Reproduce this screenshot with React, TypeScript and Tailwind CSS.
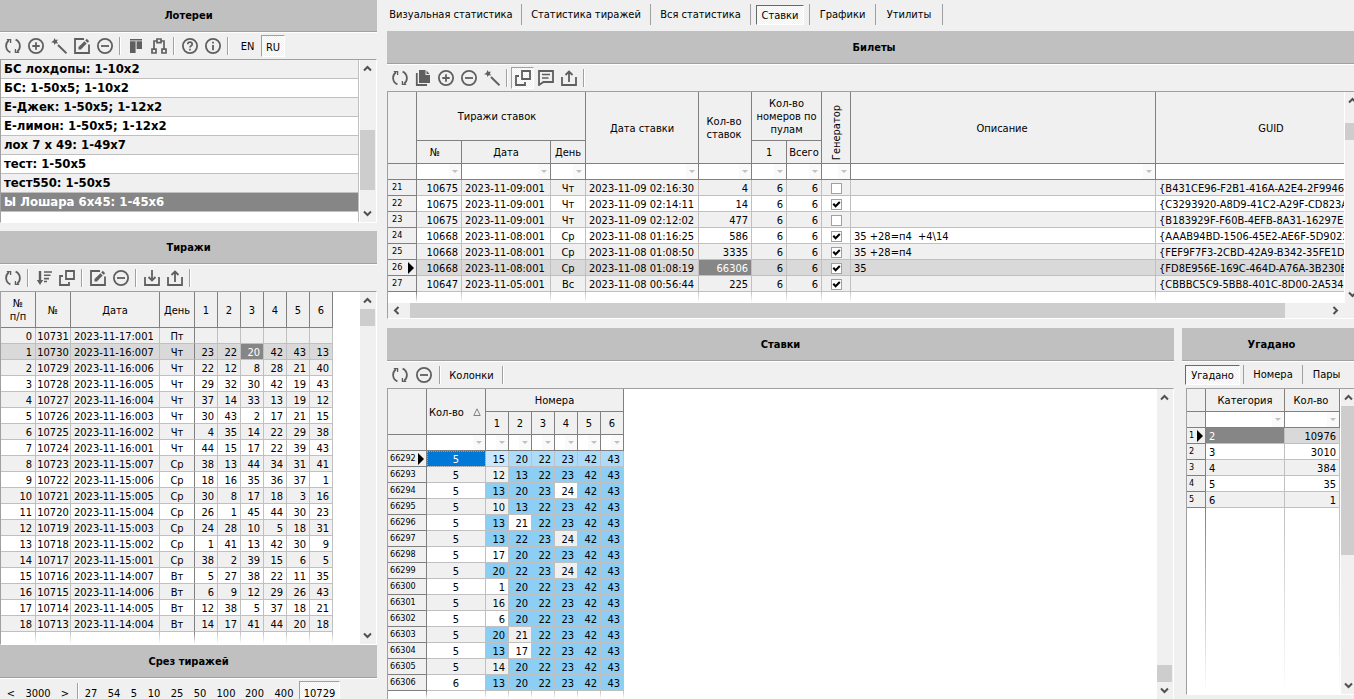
import type { ReactNode } from "react";

type IconName =
  | "refresh" | "plus" | "wand" | "edit" | "minus" | "align" | "tree" | "help"
  | "info" | "sort" | "windows" | "import" | "export" | "copy" | "comment";

const shapes: Record<IconName, ReactNode> = {
  refresh: (
    <>
      <path d="M5.4 14.4A7 7 0 0 1 4 2.3M10.6 1.6A7 7 0 0 1 12 13.7" />
      <path d="M1.8 1.6H5.6V5M14.2 14.4H10.4V11" strokeWidth="1.3" />
    </>
  ),
  plus: (
    <>
      <circle cx="8" cy="8" r="7.1" />
      <path d="M8 4.3V11.7M4.3 8H11.7" />
    </>
  ),
  minus: (
    <>
      <circle cx="8" cy="8" r="7.1" />
      <path d="M4 8H12" />
    </>
  ),
  wand: (
    <>
      <path d="M7 7L15.5 15.3" strokeWidth="2" />
      <path d="M3.6 0L4.6 2L7 1.4L5.8 3.6L7.2 5.6L4.7 5.2L3.4 7L2.8 4.8L0 4.2L2.4 2.8Z" fill="currentColor" stroke="none" />
    </>
  ),
  edit: (
    <>
      <path d="M10 1H1V15H15V6.5" />
      <path d="M4.5 11.4V9L10.4 3.2L12.7 5.5L6.9 11.4ZM11.2 2.4L12.8 .8L15.2 3.2L13.6 4.8Z" fill="currentColor" stroke="none" />
    </>
  ),
  align: <path d="M2 1H14V2.4H2ZM2 3.2H7.6V15H2ZM8.6 3.2H14V11H8.6Z" fill="currentColor" stroke="none" />,
  tree: (
    <>
      <path d="M6 1H10V4.6H6ZM1 11.2H5V15H1ZM11 11.2H15V15H11Z" strokeWidth="1.7" />
      <path d="M6 3H3V11M10 3H13V11" strokeWidth="1.7" />
    </>
  ),
  help: (
    <>
      <circle cx="8" cy="8" r="7.1" />
      <path d="M5.8 6.3C5.8 3.4 10.2 3.5 10.2 6.2C10.2 7.8 8 7.7 8 9.6M8 10.8V12.4" strokeWidth="1.7" />
    </>
  ),
  info: (
    <>
      <circle cx="8" cy="8" r="7.1" />
      <path d="M8 3.8V5.4M8 7V12.3" />
    </>
  ),
  sort: (
    <>
      <path d="M4 1V12" strokeWidth="2.4" />
      <path d="M.8 10H7.2L4 15Z" fill="currentColor" stroke="none" />
      <path d="M8 2H16M8 5.3H14.5M8 8.6H13M8 11.5H11" strokeWidth="1.6" />
    </>
  ),
  windows: (
    <>
      <path d="M7 1H15V9H7Z" />
      <path d="M4 6H1V15H10V12" />
    </>
  ),
  import: <path d="M1 7V15H15V7M8 0V10M4.5 7L8 10.5L11.5 7" />,
  export: <path d="M1 7V15H15V7M8 12V2M4.5 5L8 1.5L11.5 5" />,
  copy: (
    <>
      <path d="M4 0H10.5V5H15V13H4Z M11.5 0.4L14.6 4H11.5Z" fill="currentColor" stroke="none" />
      <path d="M1.8 3V15H12" />
    </>
  ),
  comment: (
    <>
      <path d="M1 1H15V12H5.5L1 15Z" />
      <path d="M4 4.5H12M4 8H10.5" strokeWidth="1.6" />
    </>
  ),
};

function Icon({ name }: { name: IconName }) {
  return (
    <svg viewBox="0 0 16 16" className="size-4" fill="none" stroke="currentColor" strokeWidth="1.8" aria-hidden="true">
      {shapes[name]}
    </svg>
  );
}

const checker = "bg-[repeating-conic-gradient(#fff_0_25%,#f0f0f0_0_50%)] bg-[length:2px_2px]";

function Tool({ name, label, pressed, wide }: { name: IconName; label: string; pressed?: boolean; wide?: boolean }) {
  const look = pressed ? `border-l border-t border-r border-b border-l-[#a0a0a0] border-t-[#a0a0a0] border-r-white border-b-white ${checker}` : "";
  return (
    <button
      type="button"
      aria-label={label}
      aria-pressed={pressed}
      className={`flex h-[22px] ${wide ? "w-6" : "w-[23px]"} shrink-0 items-center justify-center text-[#5f5f5f] ${look}`}
    >
      <Icon name={name} />
    </button>
  );
}

function Sep() {
  return <span className="mr-[2px] ml-[3px] h-[18px] w-[2px] shrink-0 border-r border-l border-r-white border-l-[#a0a0a0]" />;
}

function Toolbar({ label, children }: { label: string; children: ReactNode }) {
  return (
    <div role="toolbar" aria-label={label} className="flex h-[26px] shrink-0 items-center gap-x-0 pl-px">
      {children}
    </div>
  );
}

/* The right-hand titles are centred a little past the window's edge, as their panels run under it. */
function Title({ children, first, inset }: { children: string; first?: boolean; inset?: boolean }) {
  return (
    <div className={`${first ? "h-[33px]" : "h-[34px]"} shrink-0 border-b border-white`}>
      <h2 className={`flex h-full items-center justify-center border-b border-[#a0a0a0] bg-[#c0c0c0] text-[11px] font-bold ${inset ? "pl-[7px]" : ""}`}>
        {children}
      </h2>
    </div>
  );
}

const turns = { up: "", down: "rotate-180", left: "-rotate-90", right: "rotate-90" };

function Arrow({ dir }: { dir: keyof typeof turns }) {
  return (
    <button type="button" aria-label={`scroll ${dir}`} className="flex h-[17px] w-[15px] shrink-0 items-center justify-center text-[#505050]">
      <svg viewBox="0 0 9 7" className={`h-[7px] w-[9px] shrink-0 ${turns[dir]}`} fill="none" stroke="currentColor" strokeWidth="2">
        <path d="M1 5.5L4.5 2L8 5.5" />
      </svg>
    </button>
  );
}

/* parts: relative sizes of the track before the thumb, the thumb, and the track after it */
function Scroll({ parts, across }: { parts: [number, number, number]; across?: boolean }) {
  return (
    <div className={`flex shrink-0 bg-[#f0f0f0] ${across ? "h-[15px] items-center px-px" : "w-[17px] flex-col items-start border-l border-white"}`}>
      <Arrow dir={across ? "left" : "up"} />
      {parts.map((p, i) => (
        <div
          key={i}
          className={`basis-0 ${across ? "h-full" : "w-[15px]"} ${i === 1 ? "bg-[#cdcdcd]" : ""}`}
          style={{ flexGrow: p }}
        />
      ))}
      <Arrow dir={across ? "right" : "down"} />
    </div>
  );
}

function Filter({ name }: { name: string }) {
  return (
    <td className="h-4 border-r border-b border-[#808080] bg-white p-0">
      <div className="flex h-[15px]">
        <input aria-label={`Фильтр: ${name}`} className="h-full w-0 min-w-0 flex-1 outline-none" />
        <button type="button" aria-label={`Список: ${name}`} className="flex w-3 shrink-0 items-center justify-center bg-[#fafafa]">
          <svg viewBox="0 0 6 3" className="h-[3px] w-[6px]" fill="#c0c0c0"><path d="M0 0H6L3 3Z" /></svg>
        </button>
      </div>
    </td>
  );
}

function Marker() {
  return (
    <svg viewBox="0 0 6 12" className="h-3 w-[6px] shrink-0" fill="#000"><path d="M0 0L6 6L0 12Z" /></svg>
  );
}

function RowHead({ children, active, edge }: { children: ReactNode; active?: boolean; edge: string }) {
  return (
    <th scope="row" className={`h-4 border-r border-b border-[#808080] bg-[#f0f0f0] py-0 text-[9px] leading-[15px] font-normal ${edge}`}>
      <div className="flex items-center justify-between">
        <span>{children}</span>
        {active && <Marker />}
      </div>
    </th>
  );
}

const fade = "p-0 [background:linear-gradient(#c0c0c0,#fff)_right/1px_100%_no-repeat]";
const fadeDark = "p-0 [background:linear-gradient(#808080,#fff)_right/1px_100%_no-repeat]";
const head = "border-r border-b border-[#808080] bg-[#f0f0f0] px-0 pt-px pb-0 leading-[13px] font-normal";
const cell = "h-4 border-r border-b border-[#c0c0c0] pt-[2px] pb-0 leading-[13px] whitespace-pre";
const tableBase = "table-fixed border-separate border-spacing-0";

const lotteries = [
  "БС лохдопы: 1-10x2", "БС: 1-50x5; 1-10x2", "Е-Джек: 1-50x5; 1-12x2", "Е-лимон: 1-50x5; 1-12x2",
  "лох 7 x 49: 1-49x7", "тест: 1-50x5", "тест550: 1-50x5", "Ы Лошара 6x45: 1-45x6",
];

const draws: [number, string, string, number[]][] = [
  [10731, "2023-11-17:001", "Пт", []],
  [10730, "2023-11-16:007", "Чт", [23, 22, 20, 42, 43, 13]],
  [10729, "2023-11-16:006", "Чт", [22, 12, 8, 28, 21, 40]],
  [10728, "2023-11-16:005", "Чт", [29, 32, 30, 42, 19, 43]],
  [10727, "2023-11-16:004", "Чт", [37, 14, 33, 13, 19, 12]],
  [10726, "2023-11-16:003", "Чт", [30, 43, 2, 17, 21, 15]],
  [10725, "2023-11-16:002", "Чт", [4, 35, 14, 22, 29, 38]],
  [10724, "2023-11-16:001", "Чт", [44, 15, 17, 22, 39, 43]],
  [10723, "2023-11-15:007", "Ср", [38, 13, 44, 34, 31, 41]],
  [10722, "2023-11-15:006", "Ср", [18, 16, 35, 36, 37, 1]],
  [10721, "2023-11-15:005", "Ср", [30, 8, 17, 18, 3, 16]],
  [10720, "2023-11-15:004", "Ср", [26, 1, 45, 44, 30, 23]],
  [10719, "2023-11-15:003", "Ср", [24, 28, 10, 5, 18, 31]],
  [10718, "2023-11-15:002", "Ср", [1, 41, 13, 42, 30, 9]],
  [10717, "2023-11-15:001", "Ср", [38, 2, 39, 15, 6, 5]],
  [10716, "2023-11-14:007", "Вт", [5, 27, 38, 22, 11, 35]],
  [10715, "2023-11-14:006", "Вт", [6, 9, 12, 29, 26, 43]],
  [10714, "2023-11-14:005", "Вт", [12, 38, 5, 37, 18, 21]],
  [10713, "2023-11-14:004", "Вт", [14, 17, 41, 44, 20, 18]],
];

const tickets: [number, number, string, string, string, number, boolean, string, string][] = [
  [21, 10675, "2023-11-09:001", "Чт", "2023-11-09 02:16:30", 4, false, "", "{B431CE96-F2B1-416A-A2E4-2F99463"],
  [22, 10675, "2023-11-09:001", "Чт", "2023-11-09 02:14:11", 14, true, "", "{C3293920-A8D9-41C2-A29F-CD823A"],
  [23, 10675, "2023-11-09:001", "Чт", "2023-11-09 02:12:02", 477, false, "", "{B183929F-F60B-4EFB-8A31-16297E4A"],
  [24, 10668, "2023-11-08:001", "Ср", "2023-11-08 01:16:25", 586, true, "35 +28=п4  +4\\14", "{AAAB94BD-1506-45E2-AE6F-5D9023B"],
  [25, 10668, "2023-11-08:001", "Ср", "2023-11-08 01:08:50", 3335, true, "35 +28=п4", "{FEF9F7F3-2CBD-42A9-B342-35FE1DF"],
  [26, 10668, "2023-11-08:001", "Ср", "2023-11-08 01:08:19", 66306, true, "35", "{FD8E956E-169C-464D-A76A-3B230E4"],
  [27, 10647, "2023-11-05:001", "Вс", "2023-11-08 00:56:44", 225, true, "", "{CBBBC5C9-5BB8-401C-8D00-2A5342C"],
];

const bets: [number, number, number[]][] = [
  [66292, 5, [15, 20, 22, 23, 42, 43]],
  [66293, 5, [12, 13, 22, 23, 42, 43]],
  [66294, 5, [13, 20, 23, 24, 42, 43]],
  [66295, 5, [10, 13, 22, 23, 42, 43]],
  [66296, 5, [13, 21, 22, 23, 42, 43]],
  [66297, 5, [13, 22, 23, 24, 42, 43]],
  [66298, 5, [17, 20, 22, 23, 42, 43]],
  [66299, 5, [20, 22, 23, 24, 42, 43]],
  [66300, 5, [1, 20, 22, 23, 42, 43]],
  [66301, 5, [16, 20, 22, 23, 42, 43]],
  [66302, 5, [6, 20, 22, 23, 42, 43]],
  [66303, 5, [20, 21, 22, 23, 42, 43]],
  [66304, 5, [13, 17, 22, 23, 42, 43]],
  [66305, 5, [14, 20, 22, 23, 42, 43]],
  [66306, 6, [13, 20, 22, 23, 42, 43]],
];
const winning = new Set([13, 20, 22, 23, 42, 43]);
const balls = [1, 2, 3, 4, 5, 6];

function Lotteries() {
  return (
    <div className="flex h-[164px] shrink-0 border-t border-r border-b border-l border-t-[#a0a0a0] border-r-white border-b-white border-l-[#a0a0a0] bg-white">
      <ul className="min-w-0 flex-1 overflow-hidden border-r border-[#c0c0c0] text-[13px] font-bold">
        {lotteries.map((name, i) => (
          <li
            key={name}
            className={`h-[19px] border-b border-[#c0c0c0] pl-[3px] leading-[18px] ${
              i === 7 ? "bg-[#868686] text-white" : i % 2 === 0 ? "bg-[#f0f0f0]" : "bg-white"
            }`}
          >
            {name}
          </li>
        ))}
      </ul>
      <Scroll parts={[53, 60, 15]} />
    </div>
  );
}

function Draws() {
  return (
    <div className="flex min-h-0 flex-1 border-t border-r border-b border-l border-t-[#a0a0a0] border-r-white border-b-white border-l-[#a0a0a0] bg-white">
      <div className="min-w-0 flex-1 overflow-hidden">
        <table className={`${tableBase} w-[332px]`}>
          <colgroup>
            <col className="w-[35px]" /><col className="w-[35px]" /><col className="w-[89px]" /><col className="w-[35px]" />
            {balls.map((b) => <col key={b} className="w-[23px]" />)}
          </colgroup>
          <thead>
            <tr className="h-9">
              <th className={head}>№<br />п/п</th>
              <th className={head}>№</th>
              <th className={head}>Дата</th>
              <th className={head}>День</th>
              {balls.map((b) => <th key={b} className={head}>{b}</th>)}
            </tr>
          </thead>
          <tbody>
            {draws.map(([no, date, day, nums], i) => (
              <tr key={no} className={i === 1 ? "bg-[#d9d9d9]" : i % 2 === 0 ? "bg-[#f0f0f0]" : "bg-white"}>
                <td className={`${cell} pr-[3px] text-right`}>{i}</td>
                <td className={`${cell} text-center`}>{no}</td>
                <td className={`${cell} pl-[3px]`}>{date}</td>
                <td className={`${cell} border-r-[#808080] text-center`}>{day}</td>
                {balls.map((b) => (
                  <td key={b} className={`${cell} pr-[3px] text-right ${i === 1 && b === 3 ? "bg-[#868686] text-white" : ""}`}>
                    {nums[b - 1]}
                  </td>
                ))}
              </tr>
            ))}
            <tr className="h-3">
              <td className={fade} /><td className={fade} /><td className={fade} /><td className={fadeDark} />
              {balls.map((b) => <td key={b} className={fade} />)}
            </tr>
          </tbody>
        </table>
      </div>
      <Scroll parts={[0, 17, 301]} />
    </div>
  );
}

function Check({ on, row }: { on: boolean; row: number }) {
  return (
    <span className="relative mx-auto block size-[11px]">
      <input
        type="checkbox"
        defaultChecked={on}
        aria-label={`Генератор ${row}`}
        className="block size-[11px] appearance-none border border-[#a0a0a0] bg-white"
      />
      {on && (
        <svg viewBox="0 0 11 11" className="pointer-events-none absolute inset-0 size-[11px]" fill="none" stroke="#000" strokeWidth="2">
          <path d="M2.3 4.8L4.6 7.3L8.8 3" />
        </svg>
      )}
    </span>
  );
}

function Tickets() {
  return (
    <div className="flex h-[228px] shrink-0 overflow-hidden border-t border-b border-l border-t-[#a0a0a0] border-b-white border-l-[#a0a0a0] bg-white">
      <div className="flex min-w-0 flex-1 flex-col">
        <div className="min-h-0 flex-1 overflow-hidden">
          <table className={`${tableBase} w-full`}>
            <colgroup>
              <col className="w-[29px]" /><col className="w-[45px]" /><col className="w-[89px]" /><col className="w-[35px]" />
              <col className="w-[113px]" /><col className="w-[53px]" /><col className="w-[35px]" /><col className="w-[35px]" />
              <col className="w-[29px]" /><col className="w-[305px]" /><col />
            </colgroup>
            <thead>
              <tr className="h-[49px]">
                <th rowSpan={2} className={head} />
                <th colSpan={3} className={`${head} pr-2`}>Тиражи ставок</th>
                <th rowSpan={2} className={head}>Дата ставки</th>
                <th rowSpan={2} className={`${head} pr-[2px]`}>Кол-во<br />ставок</th>
                <th colSpan={2} className={head}>Кол-во<br />номеров по<br />пулам</th>
                <th rowSpan={2} className={`${head} align-bottom`}>
                  <div className="flex justify-center pb-[3px]">
                    <span className="rotate-180 [writing-mode:vertical-rl]">Генератор</span>
                  </div>
                </th>
                <th rowSpan={2} className={`${head} pr-[2px]`}>Описание</th>
                <th rowSpan={2} className={`${head} border-r-0 pl-[42px]`}>GUID</th>
              </tr>
              <tr className="h-[23px]">
                <th className={`${head} pr-2`}>№</th>
                <th className={head}>Дата</th>
                <th className={head}>День</th>
                <th className={head}>1</th>
                <th className={head}>Всего</th>
              </tr>
              <tr>
                <td className={`${head} h-4`} />
                {["№", "Дата", "День", "Дата ставки", "Кол-во ставок", "1", "Всего", "Генератор", "Описание"].map((n) => (
                  <Filter key={n} name={n} />
                ))}
                <td className="border-b border-[#808080]" />
              </tr>
            </thead>
            <tbody>
              {tickets.map(([idx, no, date, day, at, count, gen, note, guid], i) => (
                <tr key={idx} className={idx === 26 ? "bg-[#d9d9d9]" : i % 2 === 0 ? "bg-[#f0f0f0]" : "bg-white"}>
                  <RowHead active={idx === 26} edge="pr-[2px] pl-1">{idx}</RowHead>
                  <td className={`${cell} pr-[3px] text-right`}>{no}</td>
                  <td className={`${cell} pl-[3px]`}>{date}</td>
                  <td className={`${cell} text-center`}>{day}</td>
                  <td className={`${cell} pl-[3px]`}>{at}</td>
                  <td className={`${cell} pr-[3px] text-right ${idx === 26 ? "bg-[#868686] text-white" : ""}`}>{count}</td>
                  <td className={`${cell} pr-[3px] text-right`}>6</td>
                  <td className={`${cell} pr-[3px] text-right`}>6</td>
                  <td className={`${cell} px-0`}><Check on={gen} row={idx} /></td>
                  <td className={`${cell} pl-[3px]`}>{note}</td>
                  <td className={`${cell} border-r-0 pl-[3px]`}>{guid}</td>
                </tr>
              ))}
              <tr className="h-[11px]">
                <td className={fadeDark} />
                {balls.map((b) => <td key={b} className={fade} />)}
                <td className={fade} /><td className={fade} /><td className={fade} /><td />
              </tr>
            </tbody>
          </table>
        </div>
        <Scroll across parts={[6, 874, 43]} />
      </div>
      <div className="flex w-[10px] shrink-0 overflow-hidden bg-[#f0f0f0] pb-[15px]">
        <Scroll parts={[14, 17, 146]} />
      </div>
    </div>
  );
}

function Bets() {
  return (
    <div className="flex min-h-0 flex-1 border-t border-r border-l border-t-[#a0a0a0] border-r-white border-l-[#a0a0a0] bg-white">
      <div className="min-w-0 flex-1 overflow-hidden">
        <table className={`${tableBase} w-[236px]`}>
          <colgroup>
            <col className="w-[39px]" /><col className="w-[59px]" />
            {balls.map((b) => <col key={b} className="w-[23px]" />)}
          </colgroup>
          <thead>
            <tr className="h-[23px]">
              <th rowSpan={2} className={head} />
              <th rowSpan={2} className={head}>
                <div className="flex items-center justify-between pr-1 pl-[2px]">
                  Кол-во
                  <svg viewBox="0 0 8 8" className="size-2" fill="none" stroke="#808080"><path d="M.8 7.5L4 .8L7.2 7.5Z" /></svg>
                </div>
              </th>
              <th colSpan={6} className={head}>Номера</th>
            </tr>
            <tr className="h-[23px]">
              {balls.map((b) => <th key={b} className={head}>{b}</th>)}
            </tr>
            <tr>
              <td className={`${head} h-4`} />
              {["Кол-во", ...balls].map((n) => <Filter key={n} name={String(n)} />)}
            </tr>
          </thead>
          <tbody>
            {bets.map(([id, count, nums], i) => (
              <tr key={id} className={i === 0 ? "bg-[#cce8ff]" : i % 2 === 1 ? "bg-[#f0f0f0]" : "bg-white"}>
                <RowHead active={i === 0} edge="pr-[2px] pl-[2px]">{id}</RowHead>
                <td className={`${cell} text-center ${i === 0 ? "bg-[#0078d7] text-white outline-1 -outline-offset-1 outline-[#ff8728] outline-dotted" : ""}`}>
                  {count}
                </td>
                {nums.map((n) => (
                  <td key={n} className={`${cell} pr-[3px] text-right ${winning.has(n) ? (i === 0 ? "bg-[#addcfb]" : "bg-[#8ccef4]") : ""}`}>
                    {n}
                  </td>
                ))}
              </tr>
            ))}
            <tr className="h-2">
              <td className={fadeDark} /><td className={fade} />
              {balls.map((b) => <td key={b} className={fade} />)}
            </tr>
          </tbody>
        </table>
      </div>
      <Scroll parts={[259, 17, 0]} />
    </div>
  );
}

function Guessed() {
  const rows = [[2, 10976], [3, 3010], [4, 384], [5, 35], [6, 1]];
  return (
    <div className="mb-1 ml-1 flex min-h-0 flex-1 overflow-hidden border-t border-b border-l border-t-[#a0a0a0] border-b-white border-l-[#a0a0a0] bg-white">
      <table className={`${tableBase} h-full w-[153px] shrink-0`}>
        <colgroup>
          <col className="w-[19px]" /><col className="w-[79px]" /><col className="w-[55px]" />
        </colgroup>
        <thead>
          <tr className="h-[23px]">
            <th className={head} />
            <th className={head}>Категория</th>
            <th className={`${head} pr-[2px]`}>Кол-во</th>
          </tr>
          <tr>
            <td className={`${head} h-4`} />
            <Filter name="Категория" />
            <Filter name="Кол-во" />
          </tr>
        </thead>
        <tbody>
          {rows.map(([cat, count], i) => (
            <tr key={cat} className={i === 0 ? "bg-[#d9d9d9]" : i % 2 === 0 ? "bg-[#f0f0f0]" : "bg-white"}>
              <RowHead active={i === 0} edge="pr-[2px] pl-[2px]">{i + 1}</RowHead>
              <td className={`${cell} pl-[3px] ${i === 0 ? "bg-[#868686] text-white" : ""}`}>{cat}</td>
              <td className={`${cell} pr-[3px] text-right`}>{count}</td>
            </tr>
          ))}
          <tr className="h-full">
            <td className={fadeDark} /><td className={fade} /><td className={fade} />
          </tr>
        </tbody>
      </table>
      <Scroll parts={[0, 150, 122]} />
    </div>
  );
}

function Tab({ children, width, active }: { children: string; width: string; active?: boolean }) {
  return (
    <div className={`flex shrink-0 items-center border-r border-[#a0a0a0] ${width}`}>
      <button
        type="button"
        aria-pressed={active}
        className={`mx-auto whitespace-nowrap ${
          active ? `h-5 border px-[5px] pt-[2px] border-t-[#696969] border-r-white border-b-white border-l-[#696969] ${checker}` : ""
        }`}
      >
        {children}
      </button>
    </div>
  );
}

export default function App() {
  return (
    <div className="flex h-screen overflow-hidden bg-[#f0f0f0] font-['Tahoma','DejaVu_Sans_Condensed','DejaVu_Sans',sans-serif] text-[11px] leading-[15px] text-black">
      <aside className="flex w-[377px] shrink-0 flex-col">
        <Title first>Лотереи</Title>
        <Toolbar label="Лотереи">
          <Tool name="refresh" label="Обновить" />
          <Tool name="plus" label="Добавить" />
          <Tool name="wand" label="Мастер" />
          <Tool name="edit" label="Изменить" />
          <Tool name="minus" label="Удалить" />
          <Sep />
          <div className="flex pl-px">
            <Tool name="align" label="Колонки" />
            <Tool name="tree" label="Структура" />
          </div>
          <Sep />
          <div className="flex pl-px">
            <Tool name="help" label="Справка" />
            <Tool name="info" label="О программе" />
          </div>
          <Sep />
          <button type="button" className="ml-1 h-[22px] w-[25px]">EN</button>
          <button type="button" aria-pressed="true" className={`ml-px h-[22px] w-6 border-t border-r border-b border-l border-t-[#a0a0a0] border-r-white border-b-white border-l-[#a0a0a0] pt-[2px] ${checker}`}>
            RU
          </button>
        </Toolbar>
        <Lotteries />
        <div className="h-2 shrink-0" />
        <Title>Тиражи</Title>
        <Toolbar label="Тиражи">
          <Tool name="refresh" label="Обновить" />
          <Sep />
          <div className="flex pl-px">
            <Tool name="sort" label="Сортировка" />
            <Tool name="windows" label="Окна" />
          </div>
          <Sep />
          <div className="flex pl-px">
            <Tool name="edit" label="Изменить" />
            <Tool name="minus" label="Удалить" />
          </div>
          <Sep />
          <div className="flex pl-px">
            <Tool name="import" label="Импорт" />
            <Tool name="export" label="Экспорт" />
          </div>
          <Sep />
        </Toolbar>
        <Draws />
        <Title>Срез тиражей</Title>
        <div className="flex h-5 shrink-0 items-start pt-[2px]">
          <button type="button" className="h-6 w-[22px]">&lt;</button>
          <button type="button" className="h-6 w-8">3000</button>
          <button type="button" className="h-6 w-[22px]">&gt;</button>
          <span className="mt-[2px] ml-px h-5 w-[2px] shrink-0 border-r border-l border-r-white border-l-[#a0a0a0]" />
          <button type="button" className="ml-px h-6 w-[22px]">27</button>
          <button type="button" className="h-6 w-6">54</button>
          <button type="button" className="h-6 w-4">5</button>
          <button type="button" className="h-6 w-6">10</button>
          <button type="button" className="h-6 w-[22px]">25</button>
          <button type="button" className="h-6 w-6">50</button>
          <button type="button" className="h-6 w-7">100</button>
          <button type="button" className="h-6 w-[29px]">200</button>
          <button type="button" className="h-6 w-[30px]">400</button>
          <button type="button" aria-pressed="true" className={`h-6 w-[41px] border-t border-r border-l border-t-[#a0a0a0] border-r-white border-l-[#a0a0a0] ${checker}`}>
            10729
          </button>
        </div>
      </aside>

      <main className="ml-[10px] flex min-w-0 flex-1 flex-col">
        <nav aria-label="Разделы" className="flex h-[31px] shrink-0 pt-1 pb-[6px]">
          <Tab width="w-[135px] pr-[6px]">Визуальная статистика</Tab>
          <Tab width="w-[129px]">Статистика тиражей</Tab>
          <Tab width="w-[100px]">Вся статистика</Tab>
          <Tab width="w-[59px]" active>Ставки</Tab>
          <Tab width="w-[66px]">Графики</Tab>
          <Tab width="w-[67px]">Утилиты</Tab>
        </nav>
        <Title inset>Билеты</Title>
        <Toolbar label="Билеты">
          <Tool name="refresh" label="Обновить" />
          <Tool name="copy" label="Копировать" />
          <Tool name="plus" label="Добавить" />
          <Tool name="minus" label="Удалить" />
          <Tool name="wand" label="Мастер" />
          <Sep />
          <div className="flex pl-px">
            <Tool name="windows" label="Окна" pressed />
            <Tool name="comment" label="Описание" />
            <Tool name="export" label="Экспорт" />
          </div>
          <Sep />
        </Toolbar>
        <Tickets />
        <div className="h-[9px] shrink-0" />
        <div className="flex min-h-0 flex-1 gap-2">
          <section className="flex min-w-0 flex-1 flex-col">
            <Title>Ставки</Title>
            <Toolbar label="Ставки">
              <Tool name="refresh" label="Обновить" wide />
              <Tool name="minus" label="Удалить" wide />
              <Sep />
              <button type="button" className="ml-px h-[22px] w-[55px]">Колонки</button>
              <Sep />
            </Toolbar>
            <Bets />
          </section>
          <section className="flex w-[172px] shrink-0 flex-col">
            <Title inset>Угадано</Title>
            <div className="flex h-[26px] shrink-0 pt-[3px] pb-1">
              <Tab width="w-[62px]" active>Угадано</Tab>
              <Tab width="w-[59px]">Номера</Tab>
              <button type="button" className="flex-1 pr-1">Пары</button>
            </div>
            <Guessed />
          </section>
        </div>
      </main>
    </div>
  );
}
